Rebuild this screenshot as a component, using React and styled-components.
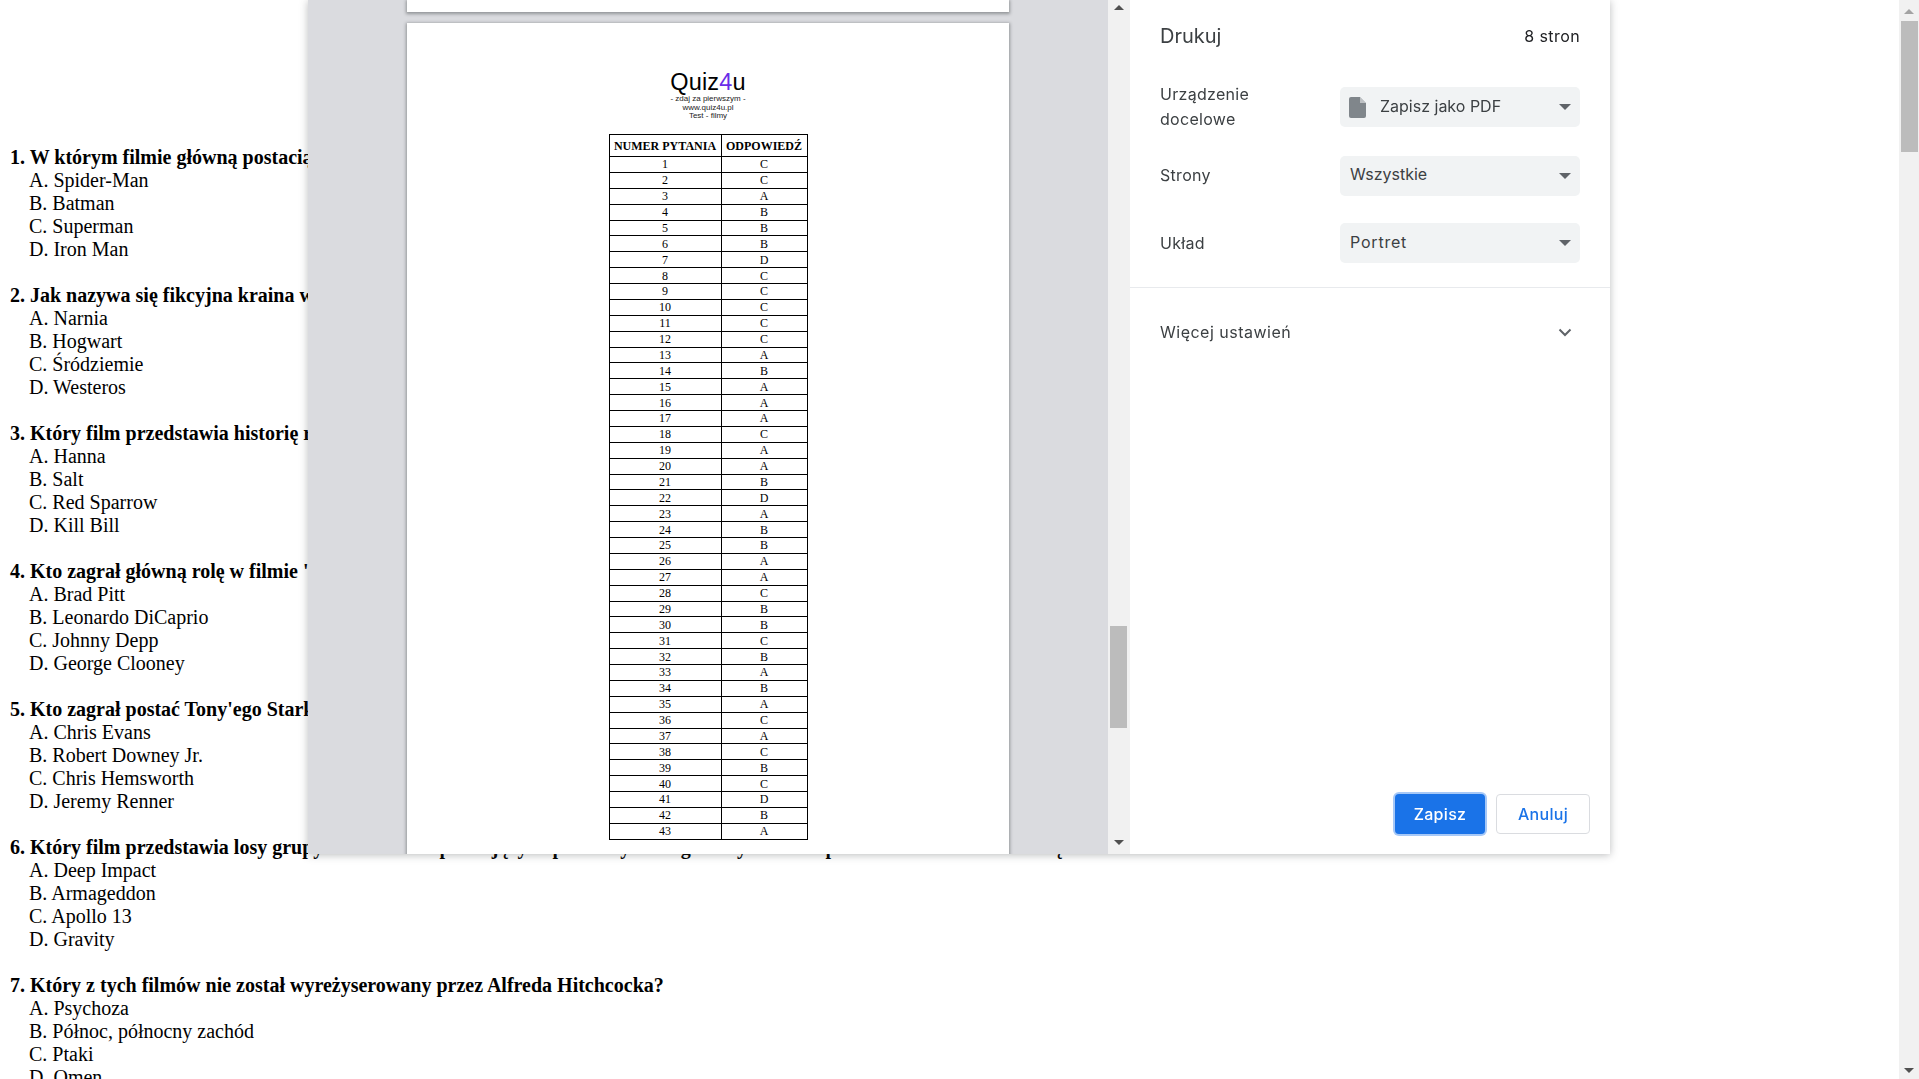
import React from "react";
import styled, { createGlobalStyle } from "styled-components";

const Global = createGlobalStyle`
  html, body { margin: 0; height: 100%; overflow: hidden; background: #fff; }
  #root { height: 100%; }
`;

const questions = [
  { q: "1. W którym filmie główną postacią jest miliarder Bruce Wayne?", a: ["A. Spider-Man", "B. Batman", "C. Superman", "D. Iron Man"] },
  { q: "2. Jak nazywa się fikcyjna kraina w powieściach Tolkiena?", a: ["A. Narnia", "B. Hogwart", "C. Śródziemie", "D. Westeros"] },
  { q: "3. Który film przedstawia historię rosyjskiej agentki?", a: ["A. Hanna", "B. Salt", "C. Red Sparrow", "D. Kill Bill"] },
  { q: "4. Kto zagrał główną rolę w filmie 'Piraci z Karaibów'?", a: ["A. Brad Pitt", "B. Leonardo DiCaprio", "C. Johnny Depp", "D. George Clooney"] },
  { q: "5. Kto zagrał postać Tony'ego Starka w filmach Marvela?", a: ["A. Chris Evans", "B. Robert Downey Jr.", "C. Chris Hemsworth", "D. Jeremy Renner"] },
  { q: "6. Który film przedstawia losy grupy astronautów próbujących powstrzymać ogromny asteroid przed uderzeniem w Ziemię?", a: ["A. Deep Impact", "B. Armageddon", "C. Apollo 13", "D. Gravity"] },
  { q: "7. Który z tych filmów nie został wyreżyserowany przez Alfreda Hitchcocka?", a: ["A. Psychoza", "B. Północ, północny zachód", "C. Ptaki", "D. Omen"] },
];

const answers = "CCABBBDCCCCCABAAACAABDABBAACBBCBABACACBCDBA".split("");

const Document = styled.main`
  height: 100vh;
  overflow: hidden;
  box-sizing: border-box;
  padding: 146px 0 0 10px;
  font-family: "Liberation Serif", "Times New Roman", serif;
  font-size: 20px;
  line-height: 23px;
  color: #000;
`;
const QuestionBlock = styled.section`
  margin-bottom: 23px;
`;
const QuestionTitle = styled.div`
  font-weight: 700;
  white-space: nowrap;
`;
const Option = styled.div`
  padding-left: 19px;
  white-space: nowrap;
`;

const Scrollbar = styled.div`
  position: ${(p) => (p.$page ? "fixed" : "relative")};
  ${(p) => (p.$page ? "top: 0; right: 0; bottom: 0;" : "")}
  width: ${(p) => (p.$page ? 20 : 22)}px;
  flex: none;
  background: #f1f1f1;
`;
const Thumb = styled.div`
  position: absolute;
  left: ${(p) => p.$left}px;
  width: 17px;
  top: ${(p) => p.$top}px;
  height: ${(p) => p.$height}px;
  background: ${(p) => p.$color};
`;
const Arrow = styled.div`
  position: absolute;
  left: ${(p) => p.$left}px;
  ${(p) => (p.$down ? `bottom: ${p.$offset}px;` : `top: ${p.$offset}px;`)}
  width: 0;
  height: 0;
  border-left: 5px solid transparent;
  border-right: 5px solid transparent;
  ${(p) => (p.$down ? "border-top" : "border-bottom")}: 5px solid ${(p) => p.$color};
`;

const Dialog = styled.div`
  position: fixed;
  top: 0;
  left: 308px;
  width: 1302px;
  height: 854px;
  display: flex;
  background: #fff;
  box-shadow: 0 1px 8px rgba(60, 64, 67, 0.35);
`;
const Preview = styled.div`
  width: 800px;
  flex: none;
  background: #dadbdf;
  overflow: hidden;
  display: flex;
  flex-direction: column;
  align-items: center;
  gap: 11px;
`;
const Sheet = styled.div`
  width: 602px;
  flex: none;
  background: #fff;
  box-shadow: 0 1px 3px 1px rgba(60, 64, 67, 0.45);
  ${(p) => (p.$stub ? "height: 12px;" : "height: 900px;")}
  display: flex;
  flex-direction: column;
  align-items: center;
  color: #000;
`;
const Logo = styled.div`
  font-family: "Liberation Sans", Arial, sans-serif;
  font-size: 23.5px;
  letter-spacing: 0.2px;
  line-height: 24px;
  margin-top: 47px;
`;
const LogoAccent = styled.span`
  color: #6a2ce8;
`;
const LogoLine = styled.div`
  font-family: "Liberation Sans", Arial, sans-serif;
  font-size: 8px;
  line-height: 8.5px;
  color: #222;
  position: relative;
  top: 1px;
`;
const AnswerTable = styled.table`
  border-collapse: collapse;
  table-layout: fixed;
  width: 196px;
  margin-top: 14.5px;
  font-family: "Liberation Serif", "Times New Roman", serif;
  font-size: 12px;
  line-height: 12px;
`;
const Th = styled.th`
  border: 1px solid #000;
  height: 21px;
  padding: 0;
  font-weight: 700;
  white-space: nowrap;
  width: ${(p) => p.$w}px;
`;
const Td = styled.td`
  border: 1px solid #000;
  height: 14.88px;
  padding: 0;
  text-align: center;
`;

const Panel = styled.aside`
  flex: 1;
  display: flex;
  flex-direction: column;
  font-family: Inter, "Noto Sans", sans-serif;
  color: #3c4043;
  min-width: 0;
`;
const Header = styled.header`
  height: 72px;
  padding: 0 30px;
  display: flex;
  align-items: center;
  justify-content: space-between;
`;
const Title = styled.h1`
  margin: 0;
  font-size: 20px;
  font-weight: 400;
`;
const PageCount = styled.span`
  font-size: 16px;
  letter-spacing: 0.4px;
  color: #202124;
`;
const Row = styled.div`
  display: grid;
  grid-template-columns: 180px 240px;
  align-items: center;
  padding: 0 30px;
  margin-top: ${(p) => p.$mt}px;
`;
const Label = styled.label`
  font-size: 16px;
  letter-spacing: 0.3px;
  line-height: 25px;
  padding-bottom: ${(p) => p.$pb || 0}px;
`;
const Select = styled.div`
  height: 40px;
  box-sizing: border-box;
  background: #f1f3f4;
  border-radius: 5px;
  display: flex;
  align-items: center;
  padding: 0 10px ${(p) => p.$pb || 2}px;
  gap: 14px;
  font-size: 16px;
  letter-spacing: ${(p) => p.$spacing || 0}px;
  position: relative;
`;
const Caret = styled.div`
  position: absolute;
  right: 9px;
  top: 17px;
  width: 0;
  height: 0;
  border-left: 6px solid transparent;
  border-right: 6px solid transparent;
  border-top: 6px solid #5f6368;
`;
const Divider = styled.hr`
  border: 0;
  height: 1px;
  background: #e8eaed;
  margin: 24px 0 0;
`;
const More = styled.div`
  display: flex;
  align-items: center;
  justify-content: space-between;
  padding: 0 30px 1px;
  height: 88px;
  font-size: 16px;
  letter-spacing: 0.5px;
`;
const Footer = styled.footer`
  margin-top: auto;
  padding: 0 20px 20px 0;
  display: flex;
  justify-content: flex-end;
  gap: 11px;
`;
const Button = styled.button`
  width: ${(p) => (p.$primary ? 90 : 94)}px;
  height: 40px;
  border-radius: 4px;
  font-family: Inter, "Noto Sans", sans-serif;
  font-size: 16px;
  letter-spacing: 0.3px;
  font-weight: 500;
  box-sizing: border-box;
  color: ${(p) => (p.$primary ? "#fff" : "#1a73e8")};
  background: ${(p) => (p.$primary ? "#1a73e8" : "#fff")};
  border: ${(p) => (p.$primary ? "0" : "1px solid #dadce0")};
  box-shadow: ${(p) => (p.$primary ? "0 0 0 2px #a6c8f7" : "none")};
`;

const DocIcon = () => (
  <svg width="17" height="21" viewBox="0 0 17 21" style={{ flex: "none", marginTop: 2, marginLeft: -1 }}>
    <path d="M2 0h9l6 6v13a2 2 0 0 1-2 2H2a2 2 0 0 1-2-2V2a2 2 0 0 1 2-2z" fill="#80868b" />
    <path d="M11 0v6h6z" fill="#f1f3f4" opacity="0.55" />
  </svg>
);
const Chevron = () => (
  <svg width="14" height="9" viewBox="0 0 14 9" style={{ marginRight: 8 }}>
    <path d="M1.5 1.5 7 7l5.5-5.5" fill="none" stroke="#5f6368" strokeWidth="2" />
  </svg>
);

export default function App() {
  return (
    <>
      <Global />
      <Document>
        {questions.map((item) => (
          <QuestionBlock key={item.q}>
            <QuestionTitle>{item.q}</QuestionTitle>
            {item.a.map((o) => (
              <Option key={o}>{o}</Option>
            ))}
          </QuestionBlock>
        ))}
      </Document>
      <Scrollbar $page>
        <Arrow $left={5} $offset={9} $color="#a3a3a3" />
        <Thumb $left={2} $top={21} $height={131} $color="#bcbcbc" />
        <Arrow $left={5} $offset={6} $color="#505050" $down />
      </Scrollbar>
      <Dialog>
        <Preview>
          <Sheet $stub />
          <Sheet>
            <Logo>
              Quiz<LogoAccent>4</LogoAccent>u
            </Logo>
            <LogoLine>- zdaj za pierwszym -</LogoLine>
            <LogoLine>www.quiz4u.pl</LogoLine>
            <LogoLine>Test - filmy</LogoLine>
            <AnswerTable>
              <thead>
                <tr>
                  <Th $w={111}>NUMER PYTANIA</Th>
                  <Th $w={85}>ODPOWIEDŹ</Th>
                </tr>
              </thead>
              <tbody>
                {answers.map((a, i) => (
                  <tr key={i}>
                    <Td>{i + 1}</Td>
                    <Td>{a}</Td>
                  </tr>
                ))}
              </tbody>
            </AnswerTable>
          </Sheet>
        </Preview>
        <Scrollbar>
          <Arrow $left={6} $offset={5} $color="#505050" />
          <Thumb $left={2} $top={626} $height={102} $color="#bcbcbc" />
          <Arrow $left={6} $offset={9} $color="#505050" $down />
        </Scrollbar>
        <Panel>
          <Header>
            <Title>Drukuj</Title>
            <PageCount>8 stron</PageCount>
          </Header>
          <Row $mt={10}>
            <Label>
              Urządzenie
              <br />
              docelowe
            </Label>
            <Select>
              <DocIcon />
              Zapisz jako PDF
              <Caret />
            </Select>
          </Row>
          <Row $mt={24}>
            <Label $pb={2}>Strony</Label>
            <Select $pb={4}>
              Wszystkie
              <Caret />
            </Select>
          </Row>
          <Row $mt={27}>
            <Label>Układ</Label>
            <Select $spacing={0.8}>
              Portret
              <Caret />
            </Select>
          </Row>
          <Divider />
          <More>
            Więcej ustawień
            <Chevron />
          </More>
          <Footer>
            <Button $primary>Zapisz</Button>
            <Button>Anuluj</Button>
          </Footer>
        </Panel>
      </Dialog>
    </>
  );
}
